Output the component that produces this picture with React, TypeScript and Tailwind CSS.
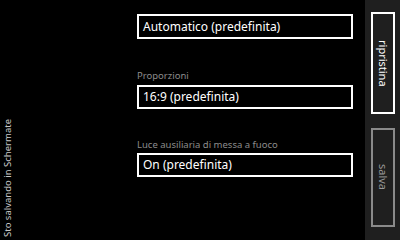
const fields = [
  { label: '', value: 'Automatico (predefinita)' },
  { label: 'Proporzioni', value: '16:9 (predefinita)' },
  { label: 'Luce ausiliaria di messa a fuoco', value: 'On (predefinita)' },
]

export default function App() {
  return (
    <div className="w-[400px] h-[240px] bg-black flex overflow-hidden font-['Noto_Sans',sans-serif]">
      <div className="w-[137px] flex items-end pl-[2px] pb-[3px]">
        <span className="[writing-mode:vertical-rl] rotate-180 text-[9.5px] leading-[12px] text-[#c8c8c8]">
          Sto salvando in Schermate
        </span>
      </div>

      <div className="w-[216px] pt-[14px] flex flex-col">
        {fields.map((f, i) => (
          <div key={i} className="flex flex-col">
            {f.label && (
              <div
                className={`text-[9.5px] leading-[13px] text-[#8c8c8c] ${
                  i === 1 ? 'mt-[30px] mb-[3px]' : 'mt-[29px] mb-[2px]'
                }`}
              >
                {f.label}
              </div>
            )}
            <div
              className={`border-2 border-white flex items-center px-[4px] text-white text-[12px] ${
                i === 0 ? 'h-[25px]' : 'h-[24px]'
              }`}
            >
              {f.value}
            </div>
          </div>
        ))}
      </div>

      <div className="ml-[12px] w-[35px] h-full bg-[#1f1f1f] pl-[6px] pt-[12px] flex flex-col">
        <div className="w-[24px] h-[102px] border-2 border-white flex items-center justify-center">
          <span className="[writing-mode:vertical-rl] text-[11px] leading-[12px] text-white">
            ripristina
          </span>
        </div>
        <div className="mt-[14px] w-[24px] h-[99px] border-2 border-[#8a8a8a] flex items-center justify-center">
          <span className="[writing-mode:vertical-rl] text-[11px] leading-[12px] text-[#9a9a9a]">
            salva
          </span>
        </div>
      </div>
    </div>
  )
}
